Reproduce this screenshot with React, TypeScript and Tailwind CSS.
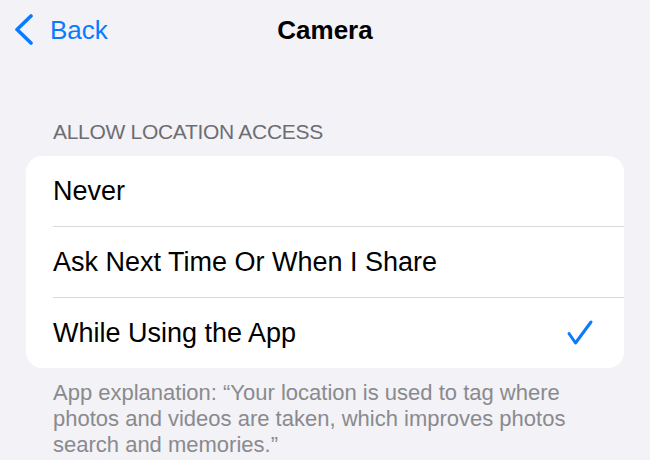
import { useState } from 'react';

const options = ['Never', 'Ask Next Time Or When I Share', 'While Using the App'];

export default function App() {
  const [selected, setSelected] = useState<string>('While Using the App');

  return (
    <div className="w-[650px] h-[460px] overflow-hidden bg-[#f2f2f7] font-['Liberation_Sans',Arial,sans-serif]">
      {/* Navigation bar */}
      <div className="grid grid-cols-[1fr_auto_1fr] items-center h-[60px] px-[14px]">
        <button className="flex items-center gap-[16px] text-[#0a7aff]">
          <svg width="20" height="32" viewBox="0 0 20 32" fill="none">
            <path d="M17 2 L3 15.5 L17 29" stroke="#0a7aff" strokeWidth="3.6" strokeLinecap="round" strokeLinejoin="round" />
          </svg>
          <span className="text-[26px] leading-none">Back</span>
        </button>
        <h1 className="text-[26px] font-bold leading-none text-black">Camera</h1>
        <div />
      </div>

      {/* Location access section */}
      <div className="pt-[60px] px-[26px]">
        <p className="px-[27px] text-[21px] leading-[24px] tracking-[-0.3px] text-[#6d6d72] uppercase">
          Allow Location Access
        </p>
        <div className="mt-[12px] bg-white rounded-[16px] overflow-hidden">
          {options.map((option, i) => (
            <div key={option}>
              {i > 0 && <div className="ml-[27px] h-px bg-[#d9d9dc]" />}
              <button
                onClick={() => setSelected(option)}
                className="w-full h-[70px] flex items-center justify-between pl-[27px] pr-[30px] text-left"
              >
                <span className="text-[27px] text-black">{option}</span>
                {selected === option && (
                  <svg width="28" height="28" viewBox="0 0 28 28" fill="none">
                    <path d="M3 14.5 L9.5 24 L25 3" stroke="#0a7aff" strokeWidth="3" strokeLinecap="round" strokeLinejoin="round" />
                  </svg>
                )}
              </button>
            </div>
          ))}
        </div>
        <p className="mt-[12px] px-[27px] pr-[30px] text-[22px] leading-[26px] text-[#8a8a8e]">
          App explanation: “Your location is used to tag where photos and videos are taken, which improves photos search and memories.”
        </p>
      </div>
    </div>
  );
}
